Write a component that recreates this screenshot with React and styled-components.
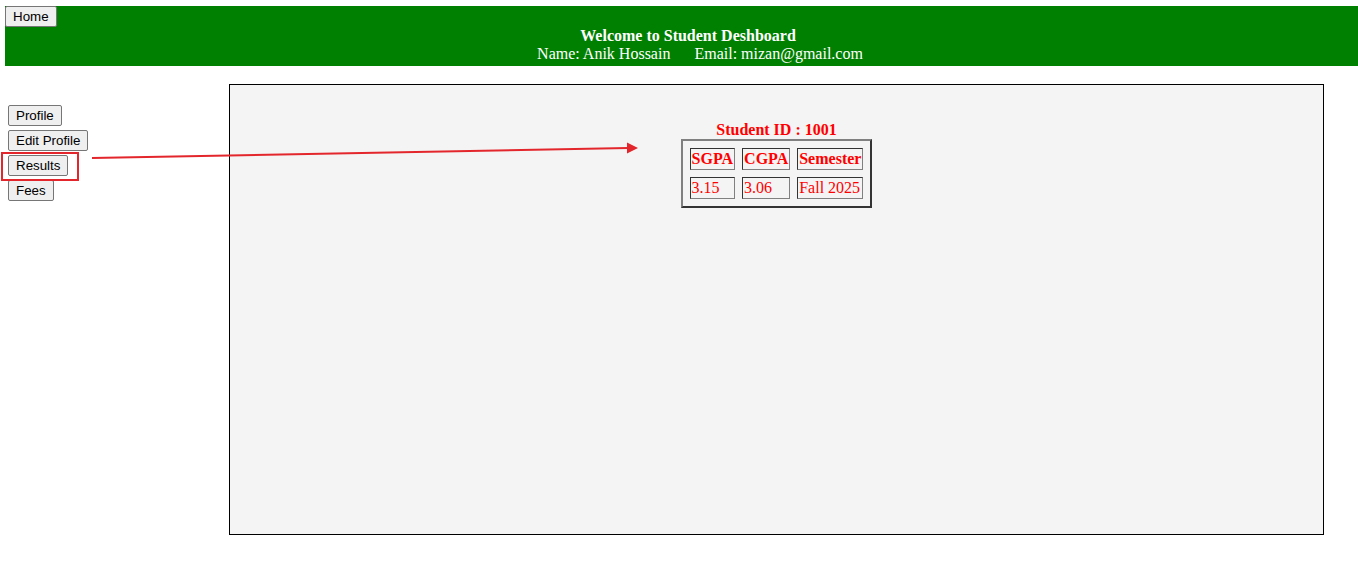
import * as React from 'react';
import styled, { createGlobalStyle } from 'styled-components';

const GlobalStyle = createGlobalStyle`
  html, body {
    margin: 0;
    padding: 0;
    background: #fff;
    font-family: 'Liberation Serif', 'Times New Roman', serif;
    font-size: 16px;
  }
`;

const results = [{ sgpa: '3.15', cgpa: '3.06', semester: 'Fall 2025' }];

export default function App() {
  return (
    <Page>
      <GlobalStyle />
      <Header>
        <PlainButton>Home</PlainButton>
        <Title>Welcome to Student Deshboard</Title>
        <Info>
          <span>Name: Anik Hossain</span>
          <span>Email: mizan@gmail.com</span>
        </Info>
      </Header>

      <Body>
        <Sidebar>
          <PlainButton>Profile</PlainButton>
          <PlainButton>Edit Profile</PlainButton>
          <PlainButton>Results</PlainButton>
          <PlainButton>Fees</PlainButton>
        </Sidebar>

        <Panel>
          <ResultTable>
            <Caption>Student ID : 1001</Caption>
            <thead>
              <tr>
                <Th>SGPA</Th>
                <Th>CGPA</Th>
                <Th>Semester</Th>
              </tr>
            </thead>
            <tbody>
              {results.map((r) => (
                <tr key={r.semester}>
                  <Td>{r.sgpa}</Td>
                  <Td>{r.cgpa}</Td>
                  <Td>{r.semester}</Td>
                </tr>
              ))}
            </tbody>
          </ResultTable>
        </Panel>
      </Body>

      {/* annotation drawn over the page */}
      <Highlight />
      <Arrow width='1358' height='569' viewBox='0 0 1358 569'>
        <line x1='92' y1='158' x2='628' y2='148' stroke='#e3262b' strokeWidth='2' />
        <polygon points='638,148 627,142.5 627,153.5' fill='#e3262b' />
      </Arrow>
    </Page>
  );
}

const Page = styled.div`
  position: relative;
  padding-top: 6px;
  min-height: 563px;
`;

const Header = styled.header`
  margin-left: 5px;
  background: #008000;
  color: #fff;
  display: flex;
  flex-direction: column;
  align-items: flex-start;
  height: 60px;
  box-sizing: border-box;
`;

const PlainButton = styled.button`
  font-family: 'Liberation Sans', Arial, sans-serif;
  font-size: 13.333px;
  line-height: normal;
  color: #000;
  background: #efefef;
  border: 1px solid #767676;
  border-radius: 2px;
  padding: 1px 7px;
  height: 21px;
  box-sizing: border-box;
  cursor: pointer;
`;

const Title = styled.div`
  align-self: stretch;
  text-align: center;
  font-weight: bold;
  line-height: 18px;
  padding-left: 13px;
`;

const Info = styled.div`
  align-self: stretch;
  display: flex;
  justify-content: center;
  gap: 24px;
  line-height: 18px;
  padding-left: 37px;
`;

const Body = styled.div`
  display: flex;
  margin-top: 18px;
  padding-left: 8px;
`;

const Sidebar = styled.nav`
  width: 221px;
  padding-top: 21px;
  display: flex;
  flex-direction: column;
  align-items: flex-start;
  gap: 4px;
`;

const Panel = styled.main`
  width: 1095px;
  height: 451px;
  box-sizing: border-box;
  border: 1px solid #000;
  background: #f4f4f4;
  padding-top: 36px;
`;

const ResultTable = styled.table`
  margin: 0 auto;
  border-collapse: separate;
  border-spacing: 7px;
  border: 2px solid;
  border-color: #808080 #333 #333 #808080;
  color: #ff0000;
`;

const Caption = styled.caption`
  font-weight: bold;
  line-height: 18px;
`;

const Th = styled.th`
  border: 1px solid;
  border-color: #333 #808080 #808080 #333;
  padding: 1px;
  font-weight: bold;
  text-align: center;
`;

const Td = styled.td`
  border: 1px solid;
  border-color: #333 #808080 #808080 #333;
  padding: 1px;
  text-align: left;
`;

const Highlight = styled.div`
  position: absolute;
  left: 1px;
  top: 152px;
  width: 78px;
  height: 29px;
  box-sizing: border-box;
  border: 2px solid #e3262b;
  pointer-events: none;
`;

const Arrow = styled.svg`
  position: absolute;
  left: 0;
  top: 0;
  pointer-events: none;
`;
